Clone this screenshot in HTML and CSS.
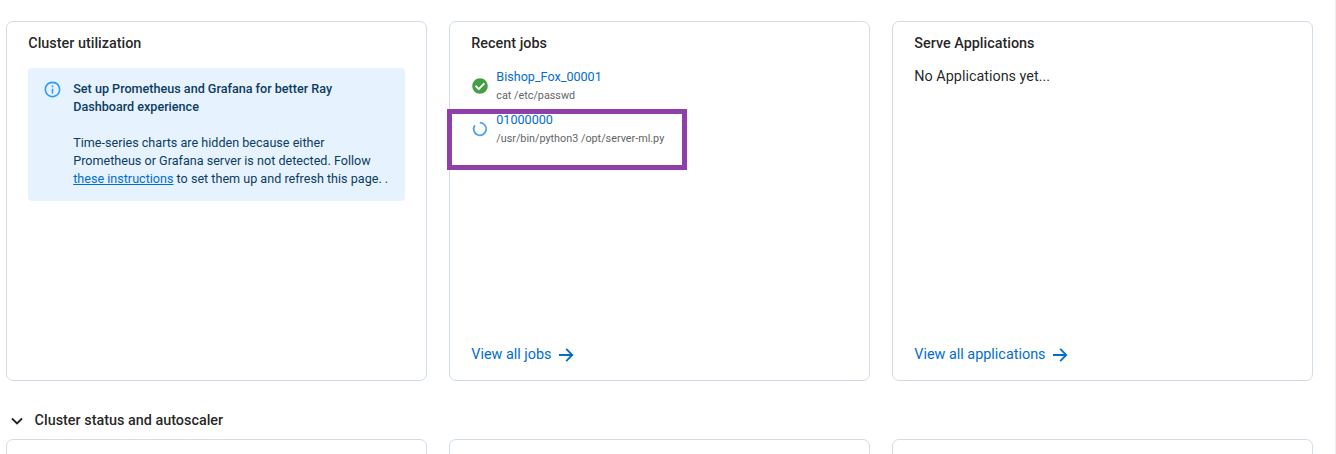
FILE: index.html
```html
<!DOCTYPE html>
<html lang="en">
<head>
<meta charset="utf-8">
<title>Ray Dashboard</title>
<link rel="stylesheet" href="styles.css">
</head>
<body>
<main class="page">
  <section class="cards">
    <article class="card">
      <h3 class="card-title">Cluster utilization</h3>
      <div class="alert">
        <svg class="alert-icon" viewBox="0 0 24 24"><path fill="currentColor" d="M11 7h2v2h-2zm0 4h2v6h-2zm1-9C6.480 2 2 6.480 2 12s4.480 10 10 10 10-4.480 10-10S17.520 2 12 2zm0 18c-4.410 0-8-3.590-8-8s3.590-8 8-8 8 3.590 8 8-3.590 8-8 8z"/></svg>
        <div class="alert-message">
          <strong>Set up Prometheus and Grafana for better Ray<br>Dashboard experience</strong>
          <p>Time-series charts are hidden because either<br>Prometheus or Grafana server is not detected. Follow<br><a href="#">these instructions</a> to set them up and refresh this page. .</p>
        </div>
      </div>
    </article>
    <article class="card">
      <h3 class="card-title">Recent jobs</h3>
      <ul class="jobs">
        <li class="job">
          <svg class="job-icon success" viewBox="0 0 512 512"><path fill="currentColor" d="M504 256c0 136.967-111.033 248-248 248S8 392.967 8 256 119.033 8 256 8s248 111.033 248 248zM227.314 387.314l184-184c6.248-6.248 6.248-16.379 0-22.627l-22.627-22.627c-6.248-6.249-16.379-6.249-22.628 0L216 308.118l-70.059-70.059c-6.248-6.248-16.379-6.248-22.628 0l-22.627 22.627c-6.248 6.248-6.248 16.379 0 22.627l104 104c6.249 6.249 16.379 6.249 22.628.001z"/></svg>
          <div class="job-text"><a class="job-name" href="#">Bishop_Fox_00001</a><span class="job-command">cat /etc/passwd</span></div>
        </li>
        <li class="job">
          <svg class="job-icon running" viewBox="0 0 16 16"><path fill="none" stroke="currentColor" stroke-width="1.800" d="M7.800 1.700A6.300 6.300 0 1 1 2.900 4.200"/></svg>
          <div class="job-text"><a class="job-name" href="#">01000000</a><span class="job-command">/usr/bin/python3 /opt/server-ml.py</span></div>
        </li>
      </ul>
      <a class="view-all" href="#">View all jobs<svg viewBox="0 0 16 16"><path d="M1 8h13M8.200 1.800 14.300 8l-6.100 6.200"/></svg></a>
      <div class="highlight"></div>
    </article>
    <article class="card">
      <h3 class="card-title">Serve Applications</h3>
      <p class="empty">No Applications yet...</p>
      <a class="view-all" href="#">View all applications<svg viewBox="0 0 16 16"><path d="M1 8h13M8.200 1.800 14.300 8l-6.100 6.200"/></svg></a>
    </article>
  </section>
  <h3 class="section-title"><svg viewBox="0 0 12 12"><path d="M1 3.500 6 8.500l5-5"/></svg>Cluster status and autoscaler</h3>
  <section class="cards">
    <article class="card"></article>
    <article class="card"></article>
    <article class="card"></article>
  </section>
</main>
</body>
</html>
```
FILE: styles.css
```css
* { box-sizing: border-box; }
body {
  margin: 0;
  background: #fff;
  color: rgba(0, 0, 0, 0.87);
  font-family: Roboto, sans-serif;
  font-size: 14.4px;
}
h3, p, ul { margin: 0; padding: 0; }
a { color: #036dcf; text-decoration: none; }
.page {
  height: 454px;
  overflow: hidden;
  padding: 21px 22px 0 6px;
  border-right: 1px solid #eee;
}
.cards {
  display: grid;
  grid-template-columns: repeat(3, 421px);
  gap: 22px;
}
.card {
  position: relative;
  display: flex;
  flex-direction: column;
  height: 360px;
  padding: 13px 21px 14px 21.3px;
  border: 1px solid #d2dce6;
  border-radius: 7px;
}
.card-title, .section-title {
  font-size: 14.4px;
  font-weight: 500;
  line-height: 17px;
}
.alert {
  display: flex;
  height: 133px;
  margin: 16px 0 0 -0.3px;
  padding: 12px 14px 0 15.3px;
  border-radius: 4px;
  background: #e6f3fe;
  color: #0d3c61;
  font-size: 12.6px;
  line-height: 18px;
}
.alert-icon {
  flex: none;
  width: 19px;
  height: 19px;
  margin-right: 10.9px;
  color: #2e9bf5;
}
.alert-message { white-space: nowrap; }
.alert strong { font-weight: 500; }
.alert p { margin-top: 18px; }
.alert a { text-decoration: underline; }
.jobs { margin-top: 15px; list-style: none; }
.job { display: flex; align-items: center; height: 38px; margin-bottom: 5px; }
.job-icon { flex: none; width: 16px; height: 16px; margin: 0 8.4px 0 0.6px; }
.success { color: #43a047; }
.running { color: #4fa0ea; }
.job-text { display: flex; flex-direction: column; }
.job-name { font-size: 12.6px; line-height: 19px; }
.job-command {
  color: #5f6469;
  font-size: 10.8px;
  line-height: 19px;
}
.highlight {
  position: absolute;
  left: -3px;
  top: 87.4px;
  width: 240.4px;
  height: 60.4px;
  border: 5px solid #8e3fa9;
}
.empty { margin-top: 14px; line-height: 22px; }
.view-all { display: flex; align-items: center; margin-top: auto; line-height: 22px; }
.view-all svg {
  width: 16px;
  height: 16px;
  margin-left: 6px;
  fill: none;
  stroke: currentColor;
  stroke-width: 1.8;
}
.section-title { display: flex; align-items: center; margin: 31px 0 10px; }
.section-title svg {
  width: 12px;
  height: 12px;
  margin: 0 11.6px 0 5px;
  fill: none;
  stroke: currentColor;
  stroke-width: 1.800;
}
```
